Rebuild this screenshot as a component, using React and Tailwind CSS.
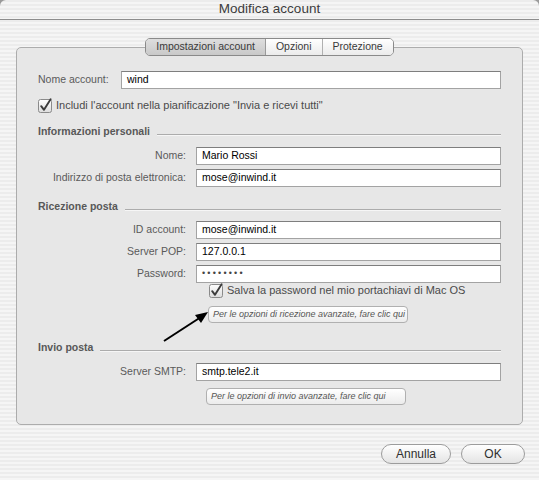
import React from "react";

const stripes =
  "bg-[repeating-linear-gradient(180deg,#ececec_0px,#ececec_2px,#f5f5f5_2px,#f5f5f5_4px)]";

const Check = () => (
  <svg width="15" height="15" viewBox="0 0 15 15" className="shrink-0">
    <defs>
      <linearGradient id="cb" x1="0" y1="0" x2="0" y2="1">
        <stop offset="0" stopColor="#ffffff" />
        <stop offset="1" stopColor="#dcdcdc" />
      </linearGradient>
    </defs>
    <rect x="0.5" y="1.5" width="13" height="13" rx="2" fill="url(#cb)" stroke="#8a8a8a" />
    <path d="M3.2 8.2 L6 11.8 L12.6 1.2" fill="none" stroke="#3c3c3c" strokeWidth="1.9" strokeLinecap="round" strokeLinejoin="round" />
  </svg>
);

const Input = ({ value, className = "" }) => (
  <div className="h-[18px] flex-1 flex items-center bg-white border border-[#a3a3a3] border-t-[#7e7e7e] pl-[5px] text-[10.5px] text-black">
    <span className={className}>{value}</span>
  </div>
);

const Row = ({ label, value, valueClass }) => (
  <div className="flex items-center">
    <div className="w-[158px] pr-[10px] text-right text-[10.5px] text-[#5a5a5a]">{label}</div>
    <Input value={value} className={valueClass} />
  </div>
);

const Header = ({ children, className = "" }) => (
  <div className={`flex items-center h-[14px] ${className}`}>
    <span className="text-[10.5px] font-bold text-[#585858]">{children}</span>
    <div className="flex-1 ml-[7px] mt-[5px] h-[2px] border-t border-[#acacac] border-b border-b-[#f6f6f6]" />
  </div>
);

const SmallButton = ({ children, className = "" }) => (
  <div
    className={`h-[17px] w-[200px] flex items-center pl-[4px] rounded-[4px] border border-[#b0b0b0] bg-[linear-gradient(#ffffff,#ececec)] text-[9px] italic text-[#555] ${className}`}
  >
    {children}
  </div>
);

const Pill = ({ children, w }) => (
  <div
    className={`${w} h-[20px] flex items-center justify-center rounded-full border border-[#9c9c9c] bg-[linear-gradient(#ffffff,#e4e4e4)] text-[12px] text-[#2e2e2e]`}
  >
    {children}
  </div>
);

export default function App() {
  return (
    <div className="w-[539px] h-[480px] bg-[#9a9a9a] font-['Liberation_Sans',Arial,sans-serif]">
      <div className={`relative w-[539px] h-[480px] rounded-t-[6px] overflow-hidden ${stripes}`}>
        {/* Title bar */}
        <div className="h-[20px] flex items-center justify-center border-b border-[#8d8d8d] text-[13.5px] text-[#3c3c3c]">
          Modifica account
        </div>

        {/* Tabs */}
        <div className="relative z-10 mt-[18px] flex justify-center">
          <div className="flex h-[18px] rounded-[5px] border border-[#8a8a8a] overflow-hidden text-[10.5px] text-[#3a3a3a]">
            <div className="px-[10px] flex items-center bg-[linear-gradient(#dedede,#c9c9c9)] border-r border-[#9a9a9a]">
              Impostazioni account
            </div>
            <div className="px-[10px] flex items-center bg-[linear-gradient(#ffffff,#ebebeb)] border-r border-[#b0b0b0]">
              Opzioni
            </div>
            <div className="px-[10px] flex items-center bg-[linear-gradient(#ffffff,#ebebeb)]">
              Protezione
            </div>
          </div>
        </div>

        {/* Panel */}
        <div className="mx-[16px] mt-[-9px] h-[378px] rounded-[5px] border border-[#acacac] bg-[#e7e7e7] pt-[23px] pl-[21px] pr-[21px]">
          <div className="flex items-center">
            <div className="w-[83px] text-[10.5px] text-[#5a5a5a]">Nome account:</div>
            <Input value="wind" />
          </div>

          <div className="mt-[9px] flex items-center gap-[3px] h-[15px]">
            <Check />
            <span className="text-[11px] text-[#4a4a4a]">
              Includi l'account nella pianificazione "Invia e ricevi tutti"
            </span>
          </div>

          <Header className="mt-[12px]">Informazioni personali</Header>
          <div className="mt-[8px] flex flex-col gap-[4px]">
            <Row label="Nome:" value="Mario Rossi" />
            <Row label="Indirizzo di posta elettronica:" value="mose@inwind.it" />
          </div>

          <Header className="mt-[13px]">Ricezione posta</Header>
          <div className="mt-[7px] flex flex-col gap-[4px]">
            <Row label="ID account:" value="mose@inwind.it" />
            <Row label="Server POP:" value="127.0.0.1" />
            <Row
              label="Password:"
              value="••••••••"
              valueClass="text-[9px] tracking-[2.2px] text-[#444]"
            />
          </div>
          <div className="mt-[0px] ml-[171px] flex items-center gap-[3px] h-[15px]">
            <Check />
            <span className="text-[11px] text-[#4a4a4a]">
              Salva la password nel mio portachiavi di Mac OS
            </span>
          </div>
          <SmallButton className="mt-[8px] ml-[170px]">
            Per le opzioni di ricezione avanzate, fare clic qui
          </SmallButton>

          <Header className="mt-[18px]">Invio posta</Header>
          <div className="mt-[8px]">
            <Row label="Server SMTP:" value="smtp.tele2.it" />
          </div>
          <SmallButton className="mt-[7px] ml-[168px]">
            Per le opzioni di invio avanzate, fare clic qui
          </SmallButton>
        </div>

        {/* Bottom buttons */}
        <div className="mt-[19px] pr-[14px] flex justify-end gap-[10px]">
          <Pill w="w-[70px]">Annulla</Pill>
          <Pill w="w-[64px]">OK</Pill>
        </div>

        {/* Annotation arrow */}
        <svg className="absolute left-0 top-0 pointer-events-none" width="539" height="480">
          <line x1="164" y1="341" x2="201" y2="317" stroke="#000" strokeWidth="2" />
          <polygon points="208,312 195,315 201,323" fill="#000" />
        </svg>
      </div>
    </div>
  );
}
